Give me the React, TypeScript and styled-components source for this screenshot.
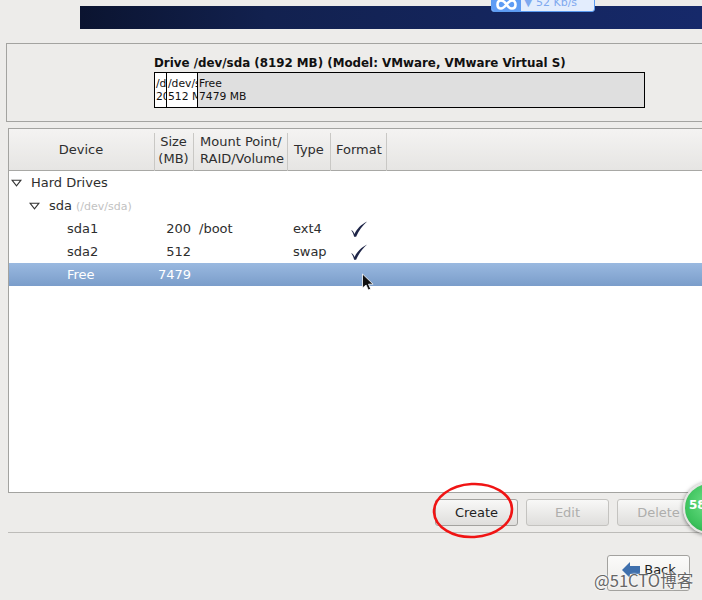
import React from "react";
import styled, { createGlobalStyle } from "styled-components";

const Global = createGlobalStyle`
  html, body { margin: 0; padding: 0; background: #edecea; overflow: hidden; }
  body { font-family: "DejaVu Sans", sans-serif; font-size: 13px; color: #1a1a1a; }
`;

const Page = styled.div`
  position: relative;
  width: 702px;
  height: 600px;
  overflow: hidden;
  display: flex;
  flex-direction: column;
  padding-top: 6px;
  box-sizing: border-box;
`;

const Banner = styled.div`
  margin-left: 80px;
  height: 23px;
  flex: none;
  background: linear-gradient(90deg, #0b1430 0%, #12214f 30%, #16296a 100%);
`;

const DrivePanel = styled.section`
  margin: 14px 0 0 6px;
  height: 79px;
  flex: none;
  box-sizing: border-box;
  border: 1px solid #a3a3a0;
  border-right: none;
  padding: 12px 0 0 147px;
`;

const DriveTitle = styled.div`
  font-weight: 700;
  font-size: 11.87px;
  line-height: 15px;
  color: #111;
  white-space: nowrap;
`;

const DriveBar = styled.div`
  display: flex;
  width: 491px;
  height: 36px;
  margin-top: 1px;
  box-sizing: border-box;
  border: 1px solid #000;
`;

const Segment = styled.div<{ $w: number; $free?: boolean }>`
  flex: ${(p) => (p.$free ? "1" : `0 0 ${p.$w}px`)};
  box-sizing: border-box;
  overflow: hidden;
  white-space: nowrap;
  background: ${(p) => (p.$free ? "#dfdfdf" : "#fff")};
  border-right: ${(p) => (p.$free ? "none" : "1px solid #000")};
  padding: 4px 0 0 1px;
  font-size: 10.75px;
  line-height: 13px;
  color: #111;
`;

const TableFrame = styled.section`
  margin: 6px 0 0 8px;
  height: 365px;
  flex: none;
  box-sizing: border-box;
  border: 1px solid #a3a3a0;
  border-right: none;
  background: #fff;
  display: flex;
  flex-direction: column;
`;

const columns = "146px 39px 94px 43px 56px 1fr";

const HeaderRow = styled.div`
  display: grid;
  grid-template-columns: ${columns};
  height: 42px;
  flex: none;
  box-sizing: border-box;
  border-bottom: 1px solid #a8a8a5;
  background: linear-gradient(180deg, #f4f3f2 0%, #e6e5e3 100%);
  font-size: 13px;
  line-height: 17px;
  color: #2e2e2e;
`;

const HeaderCell = styled.div<{ $pad?: number; $single?: boolean }>`
  display: flex;
  flex-direction: column;
  justify-content: center;
  align-items: ${(p) => (p.$pad === undefined ? "center" : "flex-start")};
  padding: 0 ${(p) => (p.$pad === undefined ? "1px" : "0")} ${(p) => (p.$single ? "6px" : "4px")} ${(p) => p.$pad ?? 0}px;
  margin: 4px 0 3px;
  border-right: 1px solid #c9c8c5;
  white-space: nowrap;
`;

const HeaderEnd = styled.div``;

const Row = styled.div<{ $selected?: boolean }>`
  display: grid;
  grid-template-columns: ${columns};
  height: 23px;
  flex: none;
  align-items: center;
  font-size: 13px;
  color: ${(p) => (p.$selected ? "#fff" : "#2e2e2e")};
  background: ${(p) => (p.$selected ? "linear-gradient(180deg, #9ab9e0 0%, #7a9dca 100%)" : "transparent")};
`;

const NameCell = styled.div<{ $indent: number }>`
  display: flex;
  align-items: center;
  padding-left: ${(p) => p.$indent}px;
  white-space: nowrap;
`;

const Arrow = styled.svg`
  width: 11px;
  height: 8px;
  margin-right: 9px;
  flex: none;
`;

const Muted = styled.span`
  font-size: 11px;
  color: #c2c2c2;
  margin-left: 4px;
  padding-top: 2px;
`;

const SizeCell = styled.div`
  text-align: right;
  padding-right: 3px;
`;

const TextCell = styled.div`
  padding-left: 5px;
`;

const CheckCell = styled.div`
  display: flex;
  padding-left: 19px;
`;

const Actions = styled.div`
  display: flex;
  justify-content: flex-end;
  gap: 8px;
  height: 27px;
  margin: 6px 2px 0 0;
  flex: none;
`;

const Button = styled.div<{ $disabled?: boolean }>`
  width: 83px;
  height: 27px;
  box-sizing: border-box;
  display: flex;
  align-items: center;
  justify-content: center;
  border: 1px solid ${(p) => (p.$disabled ? "#c4c3c0" : "#a3a29f")};
  border-radius: 3px;
  background: linear-gradient(180deg, #f8f8f7 0%, #dfdedc 100%);
  color: ${(p) => (p.$disabled ? "#aeaeac" : "#1f1f1f")};
  font-size: 13px;
`;

const Divider = styled.div`
  height: 1px;
  margin: 6px 0 0 8px;
  background: #bdbcb9;
  flex: none;
`;

const Footer = styled.div`
  display: flex;
  justify-content: flex-end;
  padding: 22px 12px 0 0;
  flex: none;
`;

const BackButton = styled(Button)`
  height: 36px;
  gap: 4px;
  padding: 0 0 7px 1px;
  align-items: center;
  background: linear-gradient(180deg, #fbfbfa 0%, #ecebe9 100%);
`;

const SpeedBadge = styled.div`
  position: absolute;
  left: 491px;
  top: -6px;
  width: 104px;
  height: 18px;
  display: flex;
  box-sizing: border-box;
  border: 1px solid #5b9bf0;
  border-radius: 3px;
  background: #e3edfd;
  overflow: hidden;
  font-size: 11px;
  line-height: 15px;
  color: #7fa9ef;
`;

const BadgeIcon = styled.div`
  width: 29px;
  background: #5f9cf4;
  flex: none;
  margin-right: 3px;
  display: flex;
  align-items: flex-start;
  justify-content: center;
`;

const RedEllipse = styled.svg`
  position: absolute;
  left: 430px;
  top: 480px;
  width: 88px;
  height: 62px;
`;

const GreenBall = styled.div`
  position: absolute;
  left: 683px;
  top: 482px;
  width: 52px;
  height: 52px;
  box-sizing: border-box;
  border-radius: 50%;
  border: 2px solid #e6e6e4;
  background: radial-gradient(circle at 50% 40%, #6fe088 0%, #3cc25c 65%, #1f9a40 100%);
  box-shadow: 0 1px 4px rgba(0, 0, 0, 0.5);
  color: #fff;
  font-size: 12px;
  font-weight: 700;
  line-height: 42px;
  padding-left: 4px;
`;

const Cursor = styled.svg`
  position: absolute;
  left: 361px;
  top: 273px;
  width: 15px;
  height: 21px;
`;

const Watermark = styled.div`
  position: absolute;
  left: 594px;
  top: 570px;
  font-family: "Noto Sans CJK SC", "DejaVu Sans", sans-serif;
  font-size: 16.6px;
  line-height: 21px;
  color: #666;
  text-shadow: 0 0 2px #fff, 0 0 2px #fff;
  white-space: nowrap;
`;

const TreeArrow = () => (
  <Arrow viewBox="0 0 11 8">
    <path d="M1 1.2h9L5.5 6.8z" fill="#fff" stroke="#333" strokeWidth="1.1" />
  </Arrow>
);

const Check = () => (
  <svg width="18" height="16" viewBox="0 0 17 16">
    <path
      d="M.6 9.2c1.4 .2 2.6 1.4 3.4 3.8C6.5 8 10 4 16.6 .6 12 4.5 8.4 9.5 5.6 15.7H3.6C3 12.8 2 10.8 .6 9.2z"
      fill="#1e2547"
    />
  </svg>
);

export default function App() {
  return (
    <Page>
      <Global />
      <Banner />
      <DrivePanel>
        <DriveTitle>Drive /dev/sda (8192 MB) (Model: VMware, VMware Virtual S)</DriveTitle>
        <DriveBar>
          <Segment $w={12}>
            /dev/sda1
            <br />
            200 MB
          </Segment>
          <Segment $w={31}>
            /dev/sda2
            <br />
            512 MB
          </Segment>
          <Segment $w={0} $free>
            Free
            <br />
            7479 MB
          </Segment>
        </DriveBar>
      </DrivePanel>
      <TableFrame>
        <HeaderRow>
          <HeaderCell $single>Device</HeaderCell>
          <HeaderCell>
            <span>Size</span>
            <span>(MB)</span>
          </HeaderCell>
          <HeaderCell $pad={6}>
            <span>Mount Point/</span>
            <span>RAID/Volume</span>
          </HeaderCell>
          <HeaderCell $pad={6} $single>
            Type
          </HeaderCell>
          <HeaderCell $pad={5} $single>
            Format
          </HeaderCell>
          <HeaderEnd />
        </HeaderRow>
        <Row>
          <NameCell $indent={2}>
            <TreeArrow />
            Hard Drives
          </NameCell>
        </Row>
        <Row>
          <NameCell $indent={20}>
            <TreeArrow />
            sda <Muted>(/dev/sda)</Muted>
          </NameCell>
        </Row>
        <Row>
          <NameCell $indent={58}>sda1</NameCell>
          <SizeCell>200</SizeCell>
          <TextCell>/boot</TextCell>
          <TextCell>ext4</TextCell>
          <CheckCell>
            <Check />
          </CheckCell>
        </Row>
        <Row>
          <NameCell $indent={58}>sda2</NameCell>
          <SizeCell>512</SizeCell>
          <TextCell />
          <TextCell>swap</TextCell>
          <CheckCell>
            <Check />
          </CheckCell>
        </Row>
        <Row $selected>
          <NameCell $indent={58}>Free</NameCell>
          <SizeCell>7479</SizeCell>
        </Row>
      </TableFrame>
      <Actions>
        <Button>Create</Button>
        <Button $disabled>Edit</Button>
        <Button $disabled>Delete</Button>
      </Actions>
      <Divider />
      <Footer>
        <BackButton>
          <svg width="18" height="16" viewBox="0 0 18 16">
            <path d="M0 8 8 0v4h10v8H8v4z" fill="#3f70ad" />
          </svg>
          Back
        </BackButton>
      </Footer>

      <SpeedBadge>
        <BadgeIcon>
          <svg width="21" height="17" viewBox="0 0 21 17">
            <path
              d="M10.5 9.5C8.5 6.5 7 5.5 5 5.5 2.8 5.5 1.5 7.2 1.5 9.5s1.3 4 3.5 4 3.5-1.5 5.5-4c2-2.5 3.5-4 5.5-4s3.5 1.7 3.5 4-1.3 4-3.5 4-3.5-1-5.5-4z"
              fill="none"
              stroke="#fff"
              strokeWidth="2.6"
            />
          </svg>
        </BadgeIcon>
        ▼ 52 Kb/s
      </SpeedBadge>
      <RedEllipse viewBox="0 0 88 62">
        <ellipse
          cx="43"
          cy="30.5"
          rx="39"
          ry="26.5"
          fill="none"
          stroke="#f01414"
          strokeWidth="2.6"
          transform="rotate(-3 43 30.5)"
        />
      </RedEllipse>
      <GreenBall>58</GreenBall>
      <Cursor viewBox="0 0 15 21">
        <path d="M1.5 1v14l3.6-3 2.2 5 2.4-1-2.2-4.8h4.600z" fill="#111" stroke="#fff" strokeWidth="0.8" />
      </Cursor>
      <Watermark>@51CTO博客</Watermark>
    </Page>
  );
}
